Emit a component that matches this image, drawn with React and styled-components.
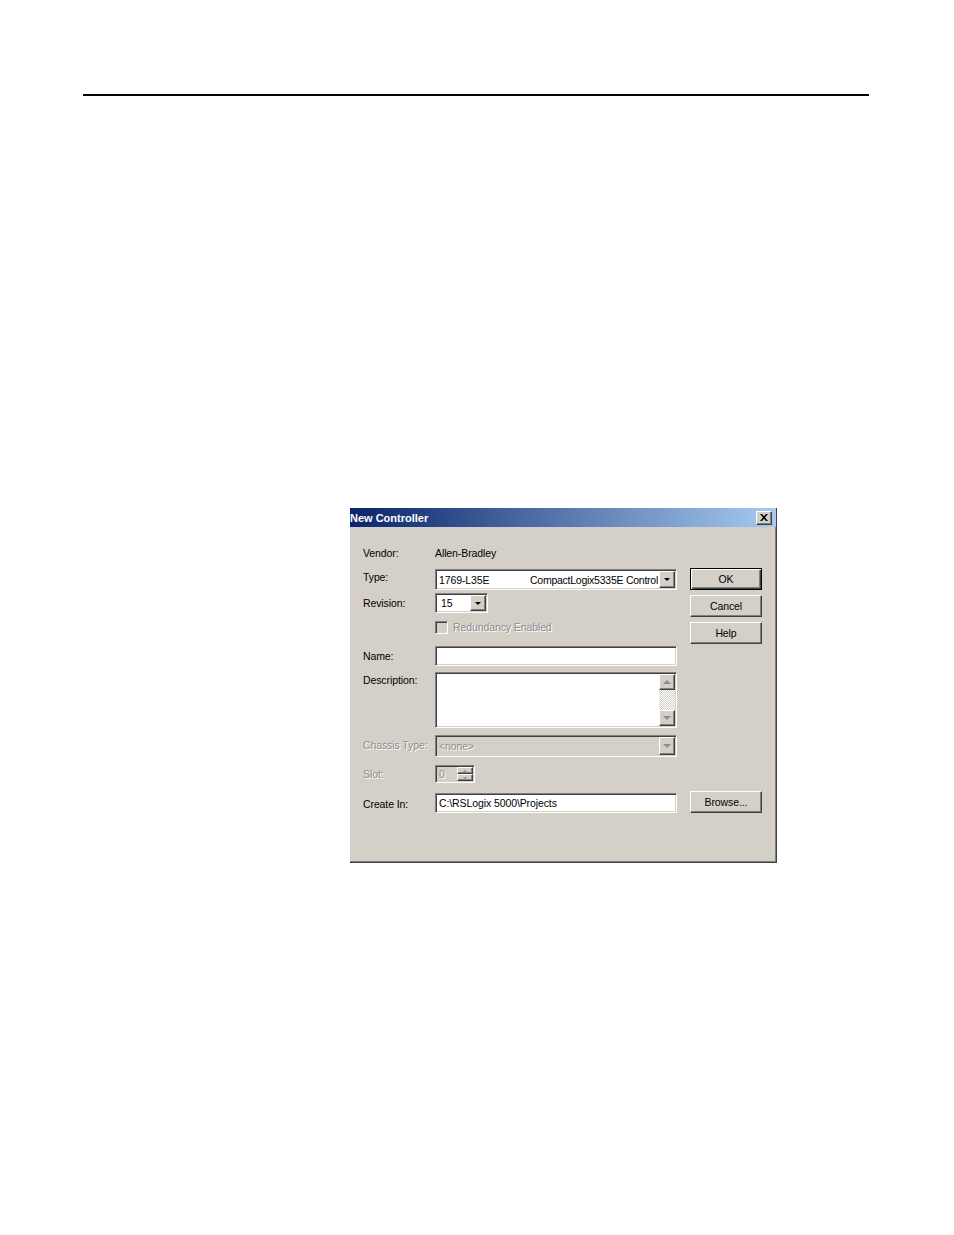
import React from 'react';
import styled, { createGlobalStyle, css } from 'styled-components';

const GlobalStyle = createGlobalStyle`
  body {
    margin: 0;
    background: #fff;
    font-family: "Liberation Sans", Arial, sans-serif;
  }
`;

const Page = styled.div`
  padding-top: 94px;
  min-height: 1235px;
  box-sizing: border-box;
`;

const Rule = styled.div`
  margin-left: 83px;
  width: 786px;
  height: 2px;
  background: #000;
`;

const Dialog = styled.div`
  margin: 412px 0 0 350px;
  width: 427px;
  height: 355px;
  box-sizing: border-box;
  background: #d4d0c8;
  border-right: 1px solid #404040;
  border-bottom: 1px solid #404040;
  box-shadow: inset -1px -1px 0 #808080;
  display: flex;
  flex-direction: column;
  font-size: 10.5px;
  letter-spacing: -0.1px;
  color: #000;
`;

const TitleBar = styled.div`
  height: 19px;
  display: flex;
  align-items: center;
  justify-content: space-between;
  padding-right: 4px;
  background: linear-gradient(to right, #0a246a, #a6caf0);
  overflow: hidden;
`;

const Title = styled.span`
  color: #fff;
  font-weight: bold;
  font-size: 11px;
  letter-spacing: 0;
  white-space: nowrap;
`;

const raised = css`
  box-sizing: border-box;
  background: #d4d0c8;
  border: 1px solid;
  border-color: #fff #404040 #404040 #fff;
  box-shadow: inset -1px -1px 0 #808080;
`;

const CloseButton = styled.div`
  ${raised};
  width: 16px;
  height: 14px;
  display: flex;
  align-items: center;
  justify-content: center;
`;

const Body = styled.div`
  padding: 18px 0 0 13px;
  display: grid;
  grid-template-columns: 59px 242px 72px;
  grid-template-rows: 24px 24px 27px 26px 26px 63px 30px 28px 20px;
  column-gap: 13px;
  align-items: start;
`;

const Label = styled.div`
  grid-column: 1;
  height: ${p => p.$h || 20}px;
  display: flex;
  align-items: center;
  white-space: nowrap;
  color: ${p => (p.$disabled ? '#8c8c8c' : '#000')};
  text-shadow: ${p => (p.$disabled ? '1px 1px 0 #fff' : 'none')};
`;

const Value = styled.div`
  grid-column: 2;
  height: 16px;
  display: flex;
  align-items: center;
`;

const Field = styled.div`
  grid-column: 2;
  box-sizing: border-box;
  width: ${p => p.$w || 242}px;
  height: ${p => p.$h || 20}px;
  background: ${p => (p.$disabled ? '#d4d0c8' : '#fff')};
  border: 1px solid;
  border-color: #808080 #fff #fff #808080;
  box-shadow: inset 1px 1px 0 #404040, inset -1px -1px 0 #d4d0c8;
  padding: 1px;
  display: flex;
  align-items: stretch;
  color: ${p => (p.$disabled ? '#8c8c8c' : '#000')};
  white-space: nowrap;
  overflow: hidden;
`;

const FieldText = styled.span`
  flex: 1;
  min-width: 0;
  display: flex;
  align-items: center;
  padding-left: 2px;
  overflow: hidden;
  text-shadow: ${p => (p.$disabled ? '1px 1px 0 #fff' : 'none')};
`;

const Code = styled.span`
  width: 91px;
  flex-shrink: 0;
`;

const Desc = styled.span`
  letter-spacing: -0.25px;
`;

const ArrowBox = styled.span`
  ${raised};
  width: 16px;
  flex-shrink: 0;
  display: flex;
  align-items: center;
  justify-content: center;
  height: ${p => (p.$h ? `${p.$h}px` : 'auto')};
`;

const Tri = styled.span`
  width: 0;
  height: 0;
  border-left: ${p => p.$size || 4}px solid transparent;
  border-right: ${p => p.$size || 4}px solid transparent;
  ${p =>
    p.$up
      ? `border-bottom: ${p.$size || 4}px solid ${p.$color || '#000'};`
      : `border-top: ${p.$size || 4}px solid ${p.$color || '#000'};`}
`;

const ScrollBar = styled.div`
  width: 16px;
  display: flex;
  flex-direction: column;
`;

const Track = styled.div`
  flex: 1;
  background: repeating-conic-gradient(#fff 0 25%, #d4d0c8 0 50%) 0 0 / 2px 2px;
`;

const Spin = styled.div`
  width: 16px;
  display: flex;
  flex-direction: column;
`;

const CheckRow = styled.div`
  grid-column: 2;
  display: flex;
  align-items: center;
  gap: 5px;
  height: 14px;
  color: #8c8c8c;
  text-shadow: 1px 1px 0 #fff;
`;

const CheckBox = styled.span`
  box-sizing: border-box;
  width: 13px;
  height: 13px;
  background: #d4d0c8;
  border: 1px solid;
  border-color: #808080 #fff #fff #808080;
  box-shadow: inset 1px 1px 0 #404040, inset -1px -1px 0 #d4d0c8;
`;

const ButtonStack = styled.div`
  grid-column: 3;
  grid-row: 2 / span 4;
  margin-top: -1px;
  display: flex;
  flex-direction: column;
  gap: 5px;
`;

const Button = styled.div`
  ${raised};
  width: 72px;
  height: 22px;
  display: flex;
  align-items: center;
  justify-content: center;
  ${p =>
    p.$default &&
    css`
      border: 1px solid #000;
      box-shadow: inset 1px 1px 0 #fff, inset -1px -1px 0 #404040, inset -2px -2px 0 #808080;
    `}
  ${p => p.$offset && `margin-top: ${p.$offset}px;`}
  ${p => p.$col && `grid-column: ${p.$col};`}
`;

function Combo({ w, h, disabled, children }) {
  return (
    <Field $w={w} $h={h} $disabled={disabled}>
      <FieldText $disabled={disabled}>{children}</FieldText>
      <ArrowBox>
        <Tri $color={disabled ? '#8c8c8c' : '#000'} $size={disabled ? 4 : 3.5} />
      </ArrowBox>
    </Field>
  );
}

export default function App() {
  return (
    <Page>
      <GlobalStyle />
      <Rule />
      <Dialog>
        <TitleBar>
          <Title>New Controller</Title>
          <CloseButton>
            <svg width="8" height="7" viewBox="0 0 8 7">
              <path d="M0 0h2l2 2.2L6 0h2L5 3.5 8 7H6L4 4.8 2 7H0l3-3.5z" fill="#000" />
            </svg>
          </CloseButton>
        </TitleBar>
        <Body>
          <Label $h={16}>Vendor:</Label>
          <Value>Allen-Bradley</Value>

          <Label $h={16}>Type:</Label>
          <Combo h={21}>
            <Code>1769-L35E</Code>
            <Desc>CompactLogix5335E Control</Desc>
          </Combo>
          <ButtonStack>
            <Button $default>OK</Button>
            <Button>Cancel</Button>
            <Button>Help</Button>
          </ButtonStack>

          <Label>Revision:</Label>
          <Combo w={53} h={20}>
            <span style={{ paddingLeft: 2 }}>15</span>
          </Combo>

          <Label $h={14} />
          <CheckRow>
            <CheckBox />
            Redundancy Enabled
          </CheckRow>

          <Label>Name:</Label>
          <Field $h={20} />

          <Label $h={16}>Description:</Label>
          <Field $h={56}>
            <FieldText />
            <ScrollBar>
              <ArrowBox $h={16}>
                <Tri $up $color="#8c8c8c" />
              </ArrowBox>
              <Track />
              <ArrowBox $h={16}>
                <Tri $color="#8c8c8c" />
              </ArrowBox>
            </ScrollBar>
          </Field>

          <Label $disabled>Chassis Type:</Label>
          <Combo h={22} disabled>
            &lt;none&gt;
          </Combo>

          <Label $h={18} $disabled>Slot:</Label>
          <Field $w={40} $h={18} $disabled>
            <FieldText $disabled>0</FieldText>
            <Spin>
              <ArrowBox $h={7}>
                <Tri $up $size={2} $color="#8c8c8c" />
              </ArrowBox>
              <ArrowBox $h={7}>
                <Tri $size={2} $color="#8c8c8c" />
              </ArrowBox>
            </Spin>
          </Field>

          <Label $h={22}>Create In:</Label>
          <Field $h={20}>
            <FieldText>C:\RSLogix 5000\Projects</FieldText>
          </Field>
          <Button $col={3} $offset={-2}>Browse...</Button>
        </Body>
      </Dialog>
    </Page>
  );
}
